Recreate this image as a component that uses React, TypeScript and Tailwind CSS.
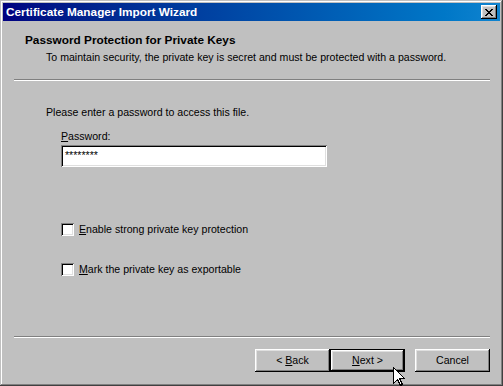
const raised =
  "shadow-[inset_-1px_-1px_#000,inset_1px_1px_#fff,inset_-2px_-2px_#808080,inset_2px_2px_#dfdfdf]";
const sunken =
  "shadow-[inset_1px_1px_#808080,inset_-1px_-1px_#fff,inset_2px_2px_#000,inset_-2px_-2px_#dfdfdf]";

function CloseGlyph() {
  // 8x7 bitmap X
  const rows = ["11000011", "01100110", "00111100", "00011000", "00111100", "01100110", "11000011"];
  return (
    <svg width="8" height="7" viewBox="0 0 8 7" shapeRendering="crispEdges">
      {rows.map((r, y) =>
        r.split("").map((c, x) =>
          c === "1" ? <rect key={`${x}-${y}`} x={x} y={y} width="1" height="1" fill="#000" /> : null,
        ),
      )}
    </svg>
  );
}

function Checkbox({ label, hot }: { label: string; hot: string }) {
  return (
    <div className="flex items-center gap-[5px] ml-[58px]">
      <span className={`w-[13px] h-[13px] bg-white ${sunken}`} />
      <span>
        <u>{hot}</u>
        {label}
      </span>
    </div>
  );
}

export default function App() {
  return (
    <div
      className="relative w-[503px] h-[386px] p-[3px] bg-[#c0c0c0] text-black text-[10.6px] leading-[13px] shadow-[inset_-1px_-1px_#404040,inset_1px_1px_#c0c0c0,inset_-2px_-2px_#808080,inset_2px_2px_#fff]"
      style={{ fontFamily: '"Liberation Sans", Arial, sans-serif' }}
    >
      <div className="flex flex-col h-full">
        {/* Title bar */}
        <div className="h-[18px] flex items-center justify-between pl-[3px] pr-[3px] bg-gradient-to-r from-[#000080] to-[#1084d0]">
          <span className="text-white font-bold text-[11.8px] leading-[14px]">
            Certificate Manager Import Wizard
          </span>
          <span className={`w-[16px] h-[14px] flex items-center justify-center bg-[#c0c0c0] ${raised}`}>
            <CloseGlyph />
          </span>
        </div>

        {/* Body */}
        <div className="flex flex-col flex-1 pb-[11px]">
          <div className="mt-[12px] ml-[22px] font-bold text-[11.8px] leading-[14px]">
            Password Protection for Private Keys
          </div>
          <div className="mt-[4px] ml-[43px]">
            To maintain security, the private key is secret and must be protected with a password.
          </div>
          <div className="mt-[15px] ml-[11px] mr-[10px] h-[2px] border-t border-t-[#808080] border-b border-b-white" />

          <div className="mt-[25px] ml-[43px]">Please enter a password to access this file.</div>
          <div className="mt-[11px] ml-[58px]">
            <u>P</u>assword:
          </div>
          <div className={`mt-[2px] ml-[58px] w-[266px] h-[22px] bg-white p-[4px] ${sunken}`}>
            ********
          </div>

          <div className="mt-[56px]">
            <Checkbox hot="E" label="nable strong private key protection" />
          </div>
          <div className="mt-[27px]">
            <Checkbox hot="M" label="ark the private key as exportable" />
          </div>

          <div className="mt-auto ml-[11px] mr-[10px] h-[2px] border-t border-t-[#808080] border-b border-b-white" />

          <div className="mt-[11px] mr-[10px] flex justify-end">
            <button className={`w-[75px] h-[23px] bg-[#c0c0c0] ${raised}`}>
              &lt; <u>B</u>ack
            </button>
            <button className="w-[75px] h-[23px] border border-black bg-[#c0c0c0]">
              <span className={`flex items-center justify-center w-full h-full ${raised}`}>
                <span>
                  <u>N</u>ext &gt;
                </span>
              </span>
            </button>
            <button className={`ml-[10px] w-[75px] h-[23px] bg-[#c0c0c0] ${raised}`}>Cancel</button>
          </div>
        </div>
      </div>

      {/* Mouse pointer */}
      <svg
        className="absolute left-[393px] top-[367px]"
        width="13"
        height="20"
        viewBox="0 0 13 20"
        shapeRendering="crispEdges"
      >
        <path
          d="M0.5 0.5 L0.5 16.5 L4.5 12.5 L7.5 18.5 L9.5 17.5 L6.5 11.5 L11.5 11.5 Z"
          fill="#fff"
          stroke="#000"
          strokeWidth="1"
        />
      </svg>
    </div>
  );
}
